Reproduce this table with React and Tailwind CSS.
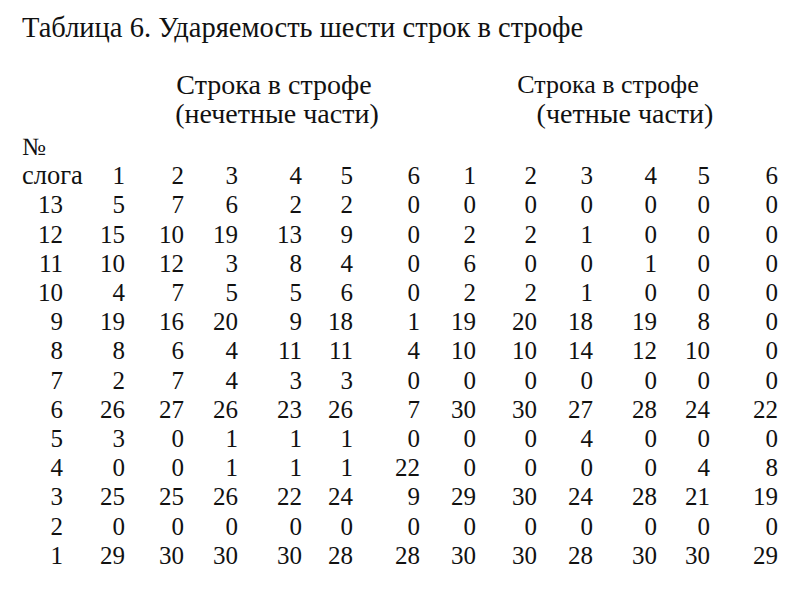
const rows = [
  ["13", 5, 7, 6, 2, 2, 0, 0, 0, 0, 0, 0, 0],
  ["12", 15, 10, 19, 13, 9, 0, 2, 2, 1, 0, 0, 0],
  ["11", 10, 12, 3, 8, 4, 0, 6, 0, 0, 1, 0, 0],
  ["10", 4, 7, 5, 5, 6, 0, 2, 2, 1, 0, 0, 0],
  ["9", 19, 16, 20, 9, 18, 1, 19, 20, 18, 19, 8, 0],
  ["8", 8, 6, 4, 11, 11, 4, 10, 10, 14, 12, 10, 0],
  ["7", 2, 7, 4, 3, 3, 0, 0, 0, 0, 0, 0, 0],
  ["6", 26, 27, 26, 23, 26, 7, 30, 30, 27, 28, 24, 22],
  ["5", 3, 0, 1, 1, 1, 0, 0, 0, 4, 0, 0, 0],
  ["4", 0, 0, 1, 1, 1, 22, 0, 0, 0, 0, 4, 8],
  ["3", 25, 25, 26, 22, 24, 9, 29, 30, 24, 28, 21, 19],
  ["2", 0, 0, 0, 0, 0, 0, 0, 0, 0, 0, 0, 0],
  ["1", 29, 30, 30, 30, 28, 28, 30, 30, 28, 30, 30, 29],
];

const heads = [1, 2, 3, 4, 5, 6, 1, 2, 3, 4, 5, 6];

const grid =
  "grid grid-cols-[63px_62px_59px_54px_64px_51px_67px_56px_61px_56px_64px_53px_68px] leading-[29.2px] text-right";

const App = () => {
  return (
    <div className="w-[802px] h-[600px] bg-white text-[#111] [font-family:'Liberation_Serif','Times_New_Roman',serif] text-[25px] overflow-hidden">
      <p className="pl-[22px] pt-[13px] text-[28.5px] leading-[30px] whitespace-nowrap">
        Таблица 6. Ударяемость шести строк в строфе
      </p>

      <div className="flex mt-[27px] leading-[29px] text-[28px] whitespace-nowrap">
        <div className="w-[425px] flex flex-col items-center pl-[123px]">
          <p>Строка в строфе</p>
          <p className="pl-[6px]">(нечетные части)</p>
        </div>
        <div className="w-[370px] flex flex-col items-center pl-[30px]">
          <p className="pr-[34px] text-[26px]">Строка в строфе</p>
          <p>(четные части)</p>
        </div>
      </div>

      <div className="mt-[4px]">
        <p className="pl-[22px] leading-[29.2px]">№</p>
        <div className={grid}>
          <span className="text-left pl-[22px] whitespace-nowrap text-[26.5px]">слога</span>
          {heads.map((h, i) => (
            <span key={i}>{h}</span>
          ))}
        </div>
        {rows.map((r, i) => (
          <div key={i} className={grid}>
            {r.map((v, j) => (
              <span key={j}>{v}</span>
            ))}
          </div>
        ))}
      </div>
    </div>
  );
};

export default App;
